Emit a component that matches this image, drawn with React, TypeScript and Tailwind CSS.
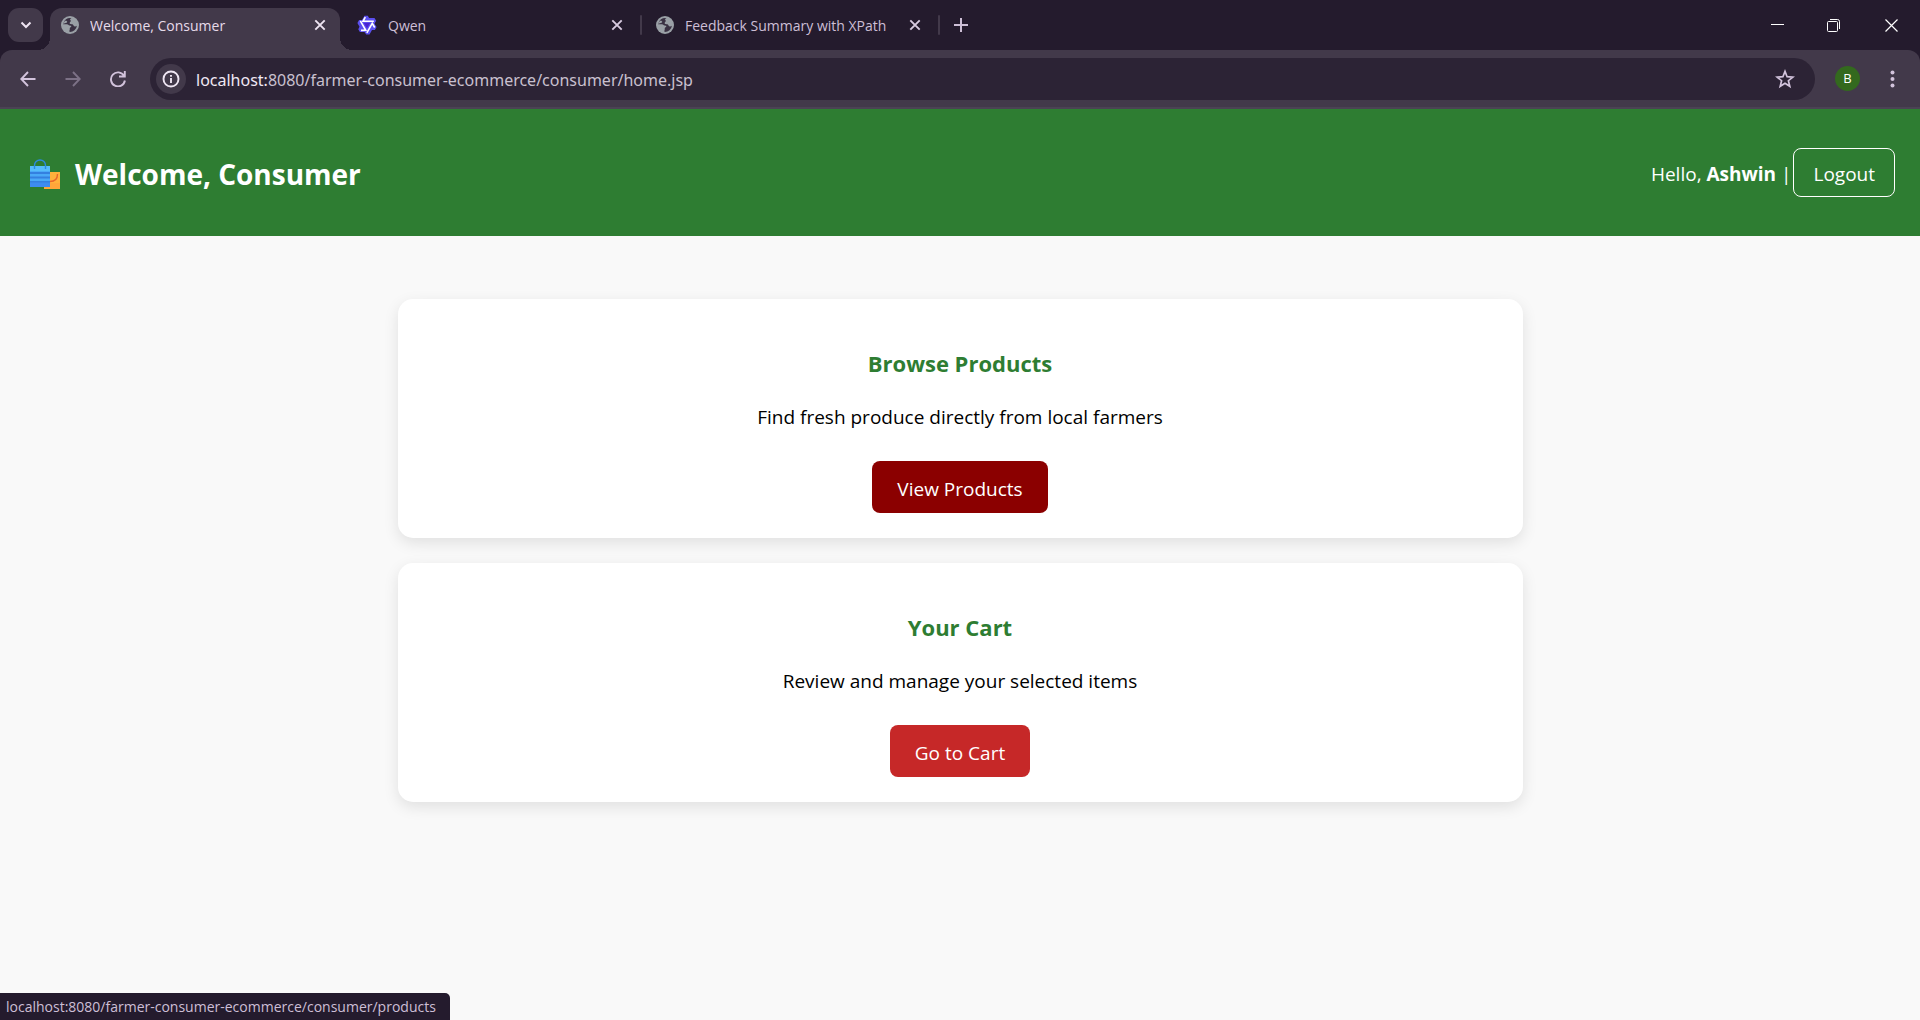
import type { ReactNode } from "react";

function GlobeIcon() {
  return (
    <svg viewBox="0 0 18 18" className="size-[18px] shrink-0" aria-hidden="true">
      <circle cx="9" cy="9" r="9" fill="#9aa0a6" />
      <path
        d="M10.500 2.200A7 7 0 0 0 2.100 8.200L6 8.300c1.200 0 1.500.9 2.400 1.200.9.200 1.700 0 1.900.8.200.9-1.300.9-1.500 1.900-.2.900.2 1.400-.4 2.200l.2 1.500A7 7 0 0 0 15.900 9.700c-1 .8-1.700 1-2.600.6-1-.5-.8-1.700-1.800-2.100-1-.3-2.500.1-2.800-.8-.3-1 1-1.400 1.200-2.300.2-.9-1-.9-.8-1.700.1-.6.800-.8 1.400-1.200Z"
        fill="#3a3143"
      />
      <path d="M4 4.800c1.400-.3 2.300.3 2.200 1.300-.1.900-1.200 1-2.200 1.100L2 7.700Z" fill="#9aa0a6" />
    </svg>
  );
}

function QwenIcon() {
  return (
    <svg viewBox="0 0 24 24" className="size-5 shrink-0" aria-hidden="true">
      <path
        d="M9 1h4l1.500 2.500H21l2 3.500-2 3.500 2.500 4-2 3.500H18l-3 5.500h-4L9 20.500H3.500l-2-3.500 1.500-3L.5 9.500l2-3.500H6Z"
        fill="#5b4ff0"
      />
      <g fill="none" stroke="#fff" strokeWidth="1.900">
        <path d="M10 2.500 7.200 7.500h13" />
        <path d="M10 2.500 7.200 7.500h13" transform="rotate(120 12 12)" />
        <path d="M10 2.500 7.200 7.500h13" transform="rotate(240 12 12)" />
      </g>
      <path d="M8.200 9.500h7.600L12 16Z" fill="#4a22d0" />
    </svg>
  );
}

function CloseIcon() {
  return (
    <svg viewBox="0 0 12 12" className="size-3" fill="none" stroke="currentColor" strokeWidth="1.900" aria-hidden="true">
      <path d="m1.300 1.300 9.400 9.400M10.700 1.300l-9.400 9.400" />
    </svg>
  );
}

function BagsIcon() {
  return (
    <svg viewBox="0 0 30 30" className="size-[30px] shrink-0" role="img" aria-label="Shopping bags">
      <path d="M14 13h16v17H14z" fill="#ffb13b" />
      <path d="M14 24h16v6H14z" fill="#ffa63a" />
      <path d="M27.500 15c0 5-2.500 7.500-7.500 7.500" fill="none" stroke="#e8662c" strokeWidth="1.400" />
      <path d="M0 7h20v21H0z" fill="#4aa9f7" />
      <path d="M0 7h20v5H0z" fill="#56bdfb" />
      <path d="M0 22h20v6H0z" fill="#3d8cf0" />
      <path d="M0 13h20v2H0zM0 17.500h20v2H0zM0 22h20v1.500H0z" fill="#3480e0" />
      <path d="M4.500 10V6.500a5.500 5.500 0 0 1 11 0V10" fill="none" stroke="#2b8be0" strokeWidth="1.400" />
    </svg>
  );
}

function ActiveTab({ title, icon }: { title: string; icon: ReactNode }) {
  return (
    <div className="relative mt-2 flex h-[42px] w-[290px] items-center rounded-t-xl bg-[#42394a] pr-3.5 pb-2 pl-[11px]">
      <span className="absolute bottom-0 -left-3 size-3 bg-[radial-gradient(circle_at_0_0,transparent_12px,#42394a_12px)]" />
      <span className="absolute -right-3 bottom-0 size-3 bg-[radial-gradient(circle_at_100%_0,transparent_12px,#42394a_12px)]" />
      {icon}
      <span className="ml-[11px] flex-1 truncate pt-0.5 text-sm text-[#e6dbea]">{title}</span>
      <button aria-label={`Close ${title}`} className="text-[#eee4f2]">
        <CloseIcon />
      </button>
    </div>
  );
}

function Tab({ title, icon, className }: { title: string; icon: ReactNode; className: string }) {
  return (
    <div className={`flex h-[50px] items-center pr-[17px] ${className}`}>
      {icon}
      <span className="ml-[11px] flex-1 truncate pt-0.5 text-sm text-[#cdbfd6]">{title}</span>
      <button aria-label={`Close ${title}`} className="text-[#d8cbe0]">
        <CloseIcon />
      </button>
    </div>
  );
}

function TabStrip() {
  return (
    <div className="flex h-[50px] items-center pl-2">
      <button aria-label="Search tabs" className="mr-[7px] flex h-[34px] w-[35px] items-center justify-center rounded-[11px] bg-[#42394a] text-[#eee4f2]">
        <svg viewBox="0 0 12 8" className="h-2 w-3" fill="none" stroke="currentColor" strokeWidth="2" aria-hidden="true">
          <path d="m1.500 1.500 4.500 4.500 4.500-4.500" />
        </svg>
      </button>
      <ActiveTab title="Welcome, Consumer" icon={<GlobeIcon />} />
      <Tab title="Qwen" icon={<QwenIcon />} className="w-[300px] pl-[17px]" />
      <span className="h-5 w-0.5 rounded-sm bg-[#42394a]" />
      <Tab title="Feedback Summary with XPath" icon={<GlobeIcon />} className="w-[296px] pl-3.5" />
      <span className="h-5 w-0.5 rounded-sm bg-[#42394a]" />
      <button aria-label="New tab" className="ml-3.5 text-[#cdbfd6]">
        <svg viewBox="0 0 14 14" className="size-3.5" fill="none" stroke="currentColor" strokeWidth="2" aria-hidden="true">
          <path d="M7 0v14M0 7h14" />
        </svg>
      </button>
      <div className="ml-auto flex h-full items-center pr-[22px] text-white">
        <button aria-label="Minimize" className="mr-[43px]">
          <svg viewBox="0 0 13 13" className="size-[13px]" stroke="currentColor" aria-hidden="true">
            <path d="M0 5.500h13" />
          </svg>
        </button>
        <button aria-label="Restore" className="mr-[45px]">
          <svg viewBox="0 0 13 13" className="size-[13px]" fill="none" stroke="currentColor" aria-hidden="true">
            <rect x=".5" y="2.500" width="10" height="10" rx="1" />
            <path d="M3 .5h7.500a2 2 0 0 1 2 2V10" />
          </svg>
        </button>
        <button aria-label="Close window">
          <svg viewBox="0 0 13 13" className="size-[13px]" fill="none" stroke="currentColor" strokeWidth="1.200" aria-hidden="true">
            <path d="m.5.5 12 12M12.500.5l-12 12" />
          </svg>
        </button>
      </div>
    </div>
  );
}

function Toolbar() {
  return (
    <div className="flex h-[59px] items-center rounded-t-xl border-b-2 border-[#4b4354] bg-[#42394a] pr-[25px] pl-5">
      <div className="flex items-center gap-[29px] text-[#d2c3dc]">
        <button aria-label="Back">
          <svg viewBox="0 0 16 16" className="size-4" fill="none" stroke="currentColor" strokeWidth="1.900" aria-hidden="true">
            <path d="M15.500 8H1.500M8 1 1.300 8 8 15" />
          </svg>
        </button>
        <button aria-label="Forward" className="text-[#7c7186]">
          <svg viewBox="0 0 16 16" className="size-4" fill="none" stroke="currentColor" strokeWidth="1.900" aria-hidden="true">
            <path d="M.5 8h14M8 1l6.700 7L8 15" />
          </svg>
        </button>
        <button aria-label="Reload">
          <svg viewBox="0 0 16 16" className="size-4" fill="none" stroke="currentColor" strokeWidth="1.900" aria-hidden="true">
            <path d="M14 4.800A7 7 0 1 0 14.900 9.500M14.800 0v5.500H9" />
          </svg>
        </button>
      </div>
      <div className="ml-6 flex h-[42px] flex-1 items-center rounded-full bg-[#2c2335] pr-5 pl-1.5">
        <button aria-label="View site information" className="flex size-[30px] items-center justify-center rounded-full bg-[#42394a] text-[#efe6f3]">
          <svg viewBox="0 0 18 18" className="size-[18px]" fill="none" stroke="currentColor" strokeWidth="1.900" aria-hidden="true">
            <circle cx="9" cy="9" r="7.500" />
            <path d="M9 8v5M9 5v1.800" />
          </svg>
        </button>
        <a href="#address" className="ml-2.5 flex-1 pt-0.5 font-['Noto_Sans','Open_Sans',sans-serif] text-base whitespace-nowrap text-[#c9c0cf]">
          <span className="text-[#f0e8f4]">localhost:</span>8080/farmer-consumer-ecommerce/consumer/home.jsp
        </a>
        <button aria-label="Bookmark this tab" className="text-[#d2c3dc]">
          <svg viewBox="0 0 20 20" className="size-5" fill="none" stroke="currentColor" strokeWidth="1.700" aria-hidden="true">
            <path d="m10 2.400 2.100 5.300 5.700.4-4.400 3.600 1.400 5.600L10 14.200l-4.800 3.100 1.400-5.600L2.200 8.100l5.700-.4Z" />
          </svg>
        </button>
      </div>
      <button aria-label="Profile" className="ml-5 flex size-[25px] items-center justify-center rounded-full bg-[#33691e] text-[13px] text-white">
        B
      </button>
      <button aria-label="Menu" className="ml-[30px] text-[#d2c3dc]">
        <svg viewBox="0 0 5 18" className="h-[18px] w-[5px]" fill="currentColor" aria-hidden="true">
          <circle cx="2.500" cy="2.500" r="2" />
          <circle cx="2.500" cy="9" r="2" />
          <circle cx="2.500" cy="15.500" r="2" />
        </svg>
      </button>
    </div>
  );
}

type CardProps = { title: string; text: string; action: string; href: string; hovered?: boolean };

function Card({ title, text, action, href, hovered }: CardProps) {
  return (
    <section className="flex flex-col items-center rounded-[15px] bg-white px-6 pt-12 pb-[25px] shadow-[0_5px_15px_rgba(0,0,0,0.1)]">
      <h2 className="text-[22px] leading-8 font-bold text-[#2e7d32]">{title}</h2>
      <p className="mt-6 text-[19px] leading-7 text-black">{text}</p>
      <a
        href={href}
        className={
          hovered
            ? "mt-[30px] flex h-[52px] items-center rounded-lg bg-[#8b0000] px-[25px] pt-1 text-[19px] text-white"
            : "mt-[30px] flex h-[52px] items-center rounded-lg bg-[#c62828] px-[25px] pt-1 text-[19px] text-white"
        }
      >
        {action}
      </a>
    </section>
  );
}

export default function App() {
  return (
    <div className="flex min-h-screen flex-col bg-[#f9f9f9] font-['Open_Sans','Noto_Sans',sans-serif]">
      <div className="bg-[#241b2d]">
        <TabStrip />
        <Toolbar />
      </div>
      <header className="flex h-[127px] items-center justify-between bg-[#2e7d32] pr-[25px] pl-[30px] text-white">
        <h1 className="flex items-center gap-[15px] pt-0.5 text-[28px] font-bold">
          <BagsIcon />
          Welcome, Consumer
        </h1>
        <div className="flex items-center gap-0.5 text-[19px]">
          <span className="pt-[3px]">
            Hello, <strong className="font-bold">Ashwin</strong> |
          </span>
          <a href="#logout" className="flex h-[49px] items-center rounded-lg border border-white px-[19px] pt-[3px]">
            Logout
          </a>
        </div>
      </header>
      <main className="mx-auto mt-[63px] flex w-full max-w-[1125px] flex-col gap-[25px]">
        <Card title="Browse Products" text="Find fresh produce directly from local farmers" action="View Products" href="#products" hovered />
        <Card title="Your Cart" text="Review and manage your selected items" action="Go to Cart" href="#cart" />
      </main>
      <div className="fixed bottom-0 left-0 flex h-[27px] items-center rounded-tr-[5px] bg-[#241b2d] pr-3.5 pl-1.5 text-sm text-[#cdbfd6]">
        localhost:8080/farmer-consumer-ecommerce/consumer/products
      </div>
    </div>
  );
}
